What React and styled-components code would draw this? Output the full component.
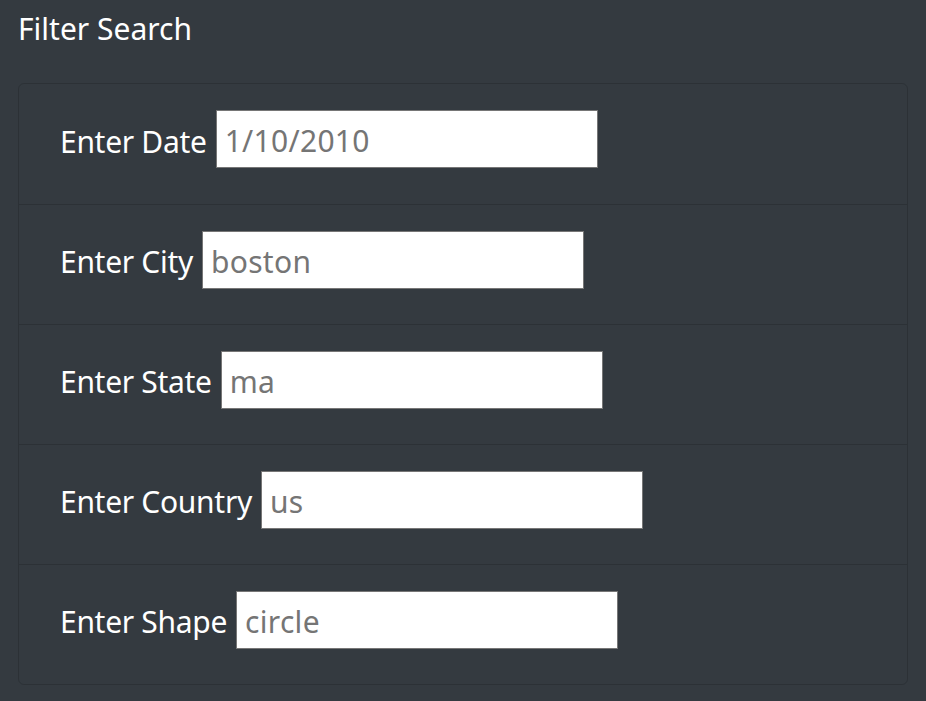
import React from "react";
import styled, { createGlobalStyle } from "styled-components";

const GlobalStyle = createGlobalStyle`
  html, body {
    margin: 0;
    background: #343a40;
  }
  body {
    font-family: "Noto Sans", "Open Sans", sans-serif;
    color: #fff;
  }
`;

const fields = [
  { label: "Enter Date", value: "1/10/2010" },
  { label: "Enter City", value: "boston" },
  { label: "Enter State", value: "ma" },
  { label: "Enter Country", value: "us" },
  { label: "Enter Shape", value: "circle" },
];

const App = () => {
  return (
    <Page>
      <GlobalStyle />
      <Title>Filter Search</Title>
      <Card>
        {fields.map((f) => (
          <Row key={f.label}>
            <Label htmlFor={f.label}>{f.label}</Label>
            <Input id={f.label} type="text" placeholder={f.value} />
          </Row>
        ))}
      </Card>
    </Page>
  );
};

const Page = styled.div`
  padding: 8px 18px 16px;
  box-sizing: border-box;
  min-height: 701px;
  display: flex;
  flex-direction: column;
`;

const Title = styled.h4`
  margin: 0 0 33px;
  font-size: 30px;
  font-weight: 400;
  line-height: 42px;
  letter-spacing: 0;
`;

const Card = styled.ul`
  list-style: none;
  margin: 0;
  padding: 0;
  border: 1px solid rgba(0, 0, 0, 0.15);
  border-radius: 6px;
`;

const Row = styled.li`
  display: flex;
  align-items: center;
  gap: 9px;
  height: 120px;
  padding: 0 41px 10px;
  box-sizing: border-box;
  border-top: 1px solid rgba(0, 0, 0, 0.15);

  &:first-child {
    border-top: none;
  }
`;

const Label = styled.label`
  padding-top: 4px;
  font-size: 30px;
  letter-spacing: -0.3px;
  color: #fff;
`;

const Input = styled.input`
  width: 382px;
  height: 58px;
  box-sizing: border-box;
  border: 1px solid #767676;
  background: #fff;
  padding: 3px 8px 0;
  font-family: "Noto Sans", "Open Sans", sans-serif;
  font-size: 30px;
  letter-spacing: 0.3px;
  outline: none;

  &::placeholder {
    color: #757575;
  }
`;

export default App;
